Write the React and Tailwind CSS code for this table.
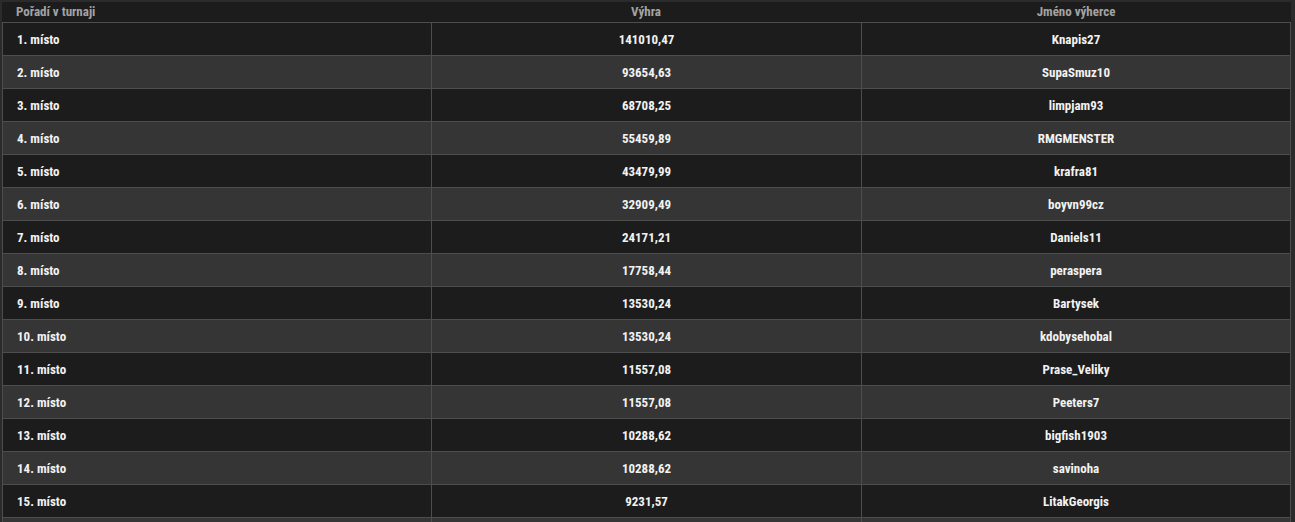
import React from "react";

const rows = [
  ["1. místo", "141010,47", "Knapis27"],
  ["2. místo", "93654,63", "SupaSmuz10"],
  ["3. místo", "68708,25", "limpjam93"],
  ["4. místo", "55459,89", "RMGMENSTER"],
  ["5. místo", "43479,99", "krafra81"],
  ["6. místo", "32909,49", "boyvn99cz"],
  ["7. místo", "24171,21", "Daniels11"],
  ["8. místo", "17758,44", "peraspera"],
  ["9. místo", "13530,24", "Bartysek"],
  ["10. místo", "13530,24", "kdobysehobal"],
  ["11. místo", "11557,08", "Prase_Veliky"],
  ["12. místo", "11557,08", "Peeters7"],
  ["13. místo", "10288,62", "bigfish1903"],
  ["14. místo", "10288,62", "savinoha"],
  ["15. místo", "9231,57", "LitakGeorgis"],
  ["", "", ""],
];

export default function App() {
  return (
    <div
      className="h-[522px] overflow-hidden bg-[#2b2b2b] pt-[2px] pl-[2px]"
      style={{ fontFamily: '"Roboto Condensed", Roboto, "Liberation Sans", sans-serif' }}
    >
      <div className="w-[1289px] bg-[#1c1c1c]">
        <div className="grid grid-cols-[429px_430px_1fr] h-[21px] border-b border-[#4d4d4d] text-[13px] font-bold text-[#a3a3a3] leading-[20px]">
          <div className="pl-[14px]">Pořadí v turnaji</div>
          <div className="text-center">Výhra</div>
          <div className="text-center">Jméno výherce</div>
        </div>
        {rows.map((r, i) => (
          <div
            key={i}
            className={`grid grid-cols-[429px_430px_1fr] h-[33px] border-b border-x border-[#4d4d4d] text-[13px] font-bold text-[#f2f2f2] leading-[33px] ${
              i % 2 === 0 ? "bg-[#1c1c1c]" : "bg-[#353535]"
            }`}
          >
            <div className="pl-[14px] border-r border-[#4d4d4d]">{r[0]}</div>
            <div className="text-center border-r border-[#4d4d4d]">{r[1]}</div>
            <div className="text-center">{r[2]}</div>
          </div>
        ))}
      </div>
    </div>
  );
}
